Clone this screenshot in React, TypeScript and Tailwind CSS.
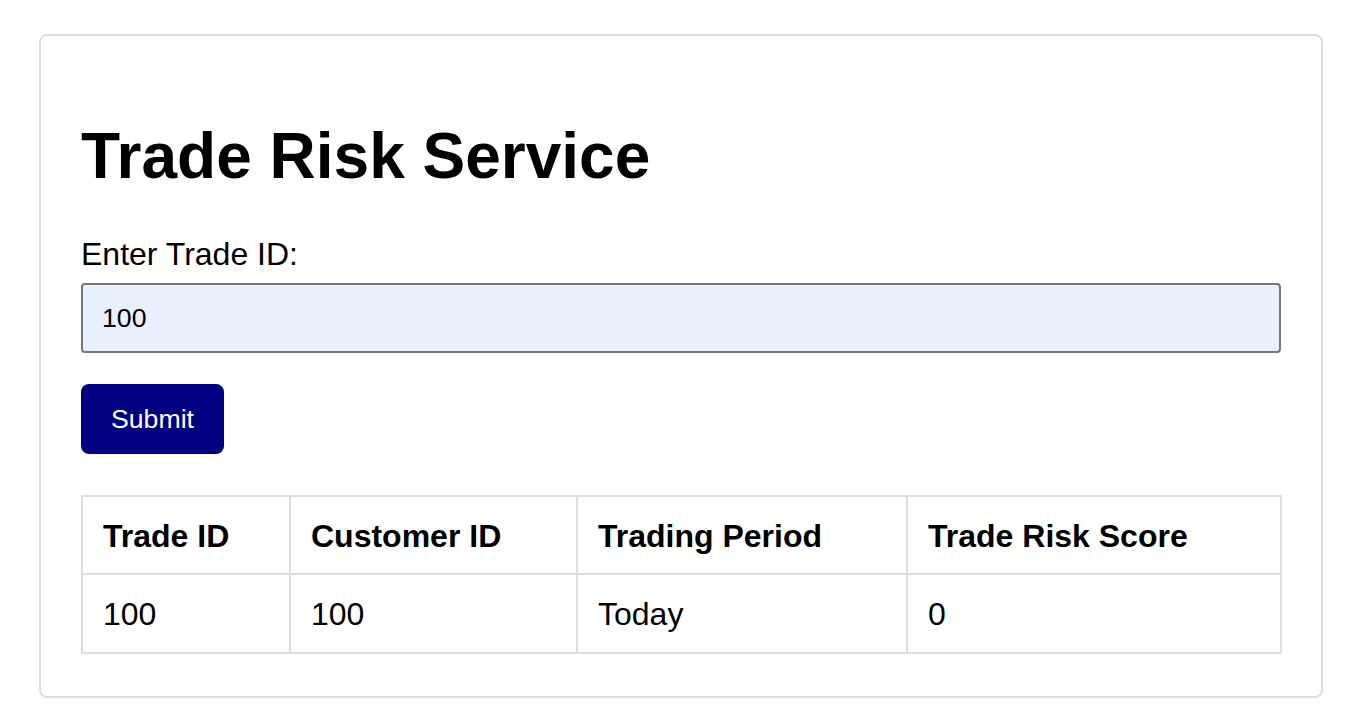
import React from "react";

export default function App() {
  const font = { fontFamily: '"Liberation Sans", Arial, sans-serif' };
  return (
    <div className="min-h-[728px] w-[1370px] bg-white pt-[34px] pl-[39px]" style={font}>
      <div className="box-border w-[1284px] rounded-[8px] border-2 border-[#dddddd] px-[40px] pb-[42px] pt-[40px]">
        <h1 className="mt-[43px] mb-[43px] text-[64px] font-bold leading-[74px] text-black">
          Trade Risk Service
        </h1>
        <label className="block text-[32px] leading-[37px] text-black">Enter Trade ID:</label>
        <input
          defaultValue="100"
          className="mt-[10px] box-border block h-[70px] w-[1200px] rounded-[4px] border-2 border-[#767676] bg-[#e8f0fe] px-[19px] text-[26.67px] text-black outline-none"
          style={font}
        />
        <button
          className="mt-[31px] block h-[70px] w-[143px] rounded-[8px] bg-[#000080] text-[26.67px] text-white"
          style={font}
        >
          Submit
        </button>
        <table className="mt-[41px] w-[1199px] table-fixed border-collapse text-[32px] leading-[36px] text-black">
          <colgroup>
            <col className="w-[208px]" />
            <col className="w-[287px]" />
            <col className="w-[330px]" />
            <col className="w-[374px]" />
          </colgroup>
          <thead>
            <tr>
              <th className="border-2 border-[#dddddd] px-[20px] pt-[21px] pb-[19px] text-left font-bold">Trade ID</th>
              <th className="border-2 border-[#dddddd] px-[20px] pt-[21px] pb-[19px] text-left font-bold">Customer ID</th>
              <th className="border-2 border-[#dddddd] px-[20px] pt-[21px] pb-[19px] text-left font-bold">Trading Period</th>
              <th className="border-2 border-[#dddddd] px-[20px] pt-[21px] pb-[19px] text-left font-bold">Trade Risk Score</th>
            </tr>
          </thead>
          <tbody>
            <tr>
              <td className="border-2 border-[#dddddd] px-[20px] pt-[21px] pb-[20px]">100</td>
              <td className="border-2 border-[#dddddd] px-[20px] pt-[21px] pb-[20px]">100</td>
              <td className="border-2 border-[#dddddd] px-[20px] pt-[21px] pb-[20px]">Today</td>
              <td className="border-2 border-[#dddddd] px-[20px] pt-[21px] pb-[20px]">0</td>
            </tr>
          </tbody>
        </table>
      </div>
    </div>
  );
}
